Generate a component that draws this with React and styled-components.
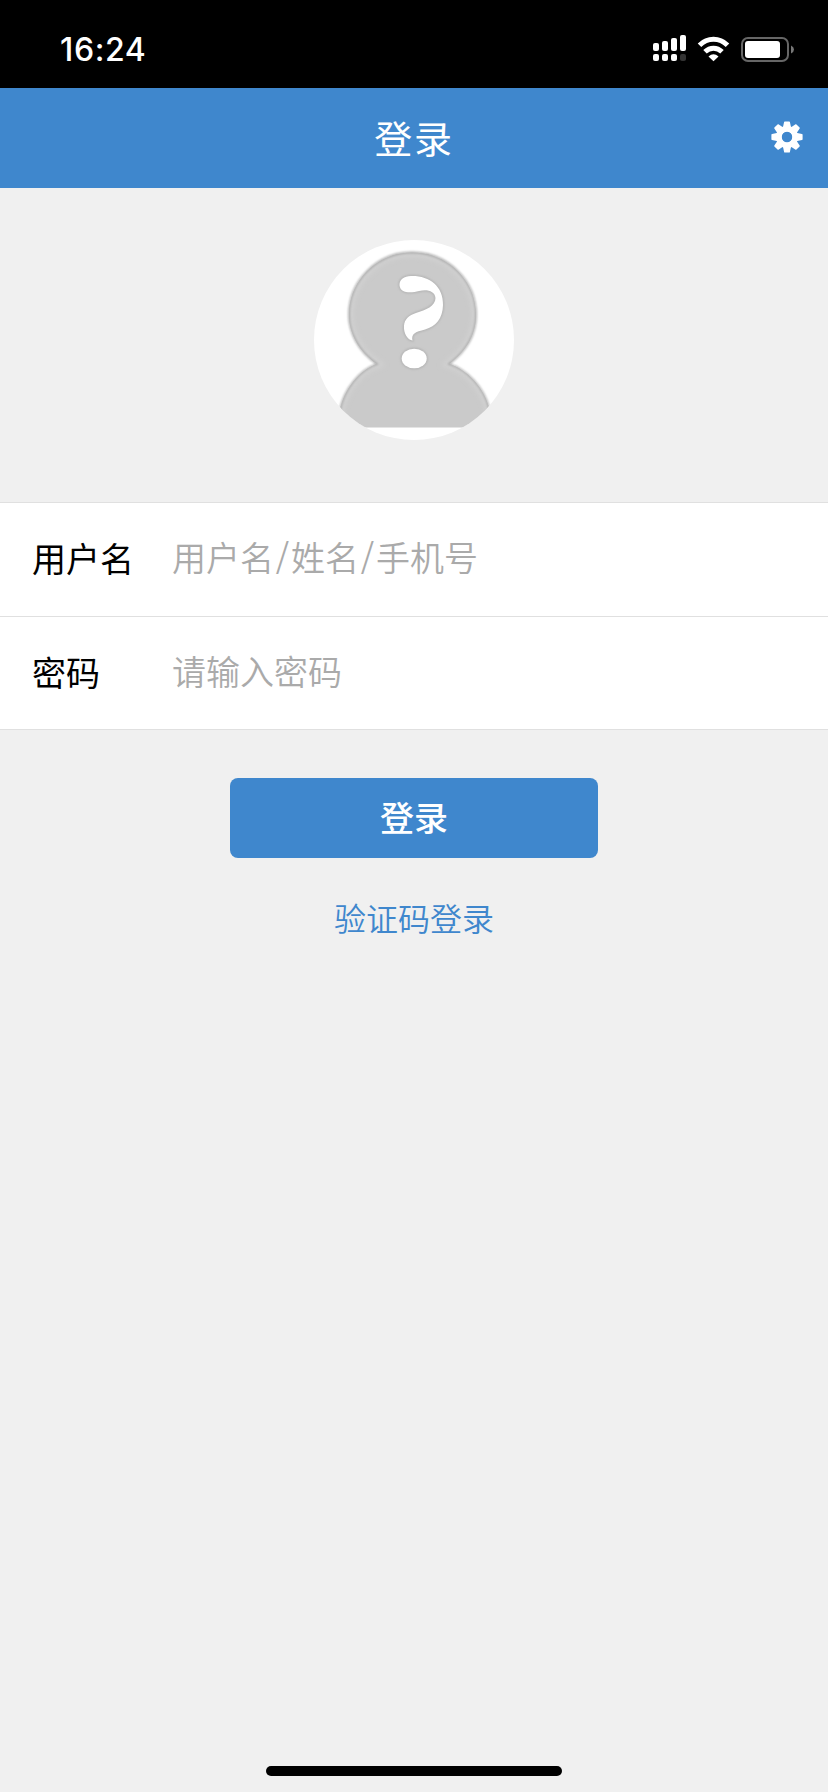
import React from "react";
import styled, { createGlobalStyle } from "styled-components";

const Global = createGlobalStyle`
  *, *::before, *::after { box-sizing: border-box; }
  body {
    margin: 0;
    background: #f0f0f0;
    font-family: "Noto Sans CJK SC", sans-serif;
  }
`;

const Screen = styled.div`
  display: flex;
  flex-direction: column;
  width: 828px;
  height: 1792px;
  overflow: hidden;
  background: #f0f0f0;
`;

const StatusBar = styled.div`
  display: flex;
  justify-content: space-between;
  align-items: flex-start;
  height: 88px;
  flex: none;
  padding: 0 34px 0 60px;
  background: #000;
`;

const Clock = styled.span`
  padding-top: 31px;
  color: #fff;
  font: 500 32px/38px Inter, sans-serif;
  letter-spacing: 0.6px;
`;

const StatusIcons = styled.svg`
  display: block;
  width: 144px;
  height: 32px;
  margin-top: 33px;
`;

const NavBar = styled.header`
  display: grid;
  grid-template-columns: 80px 1fr 80px;
  align-items: center;
  height: 100px;
  flex: none;
  background: #3f87cd;
`;

const Title = styled.h1`
  grid-column: 2;
  margin: 0 0 3px;
  text-align: center;
  color: #fff;
  font-size: 38px;
  font-weight: 400;
  line-height: 56px;
  letter-spacing: 1.8px;
`;

const SettingsButton = styled.button`
  display: block;
  width: 32px;
  height: 32px;
  margin: 0 0 2px 23px;
  padding: 0;
  border: 0;
  background: none;
  svg { display: block; }
`;

const AvatarArea = styled.div`
  display: flex;
  justify-content: center;
  height: 314px;
  flex: none;
  padding-top: 52px;
`;

const Avatar = styled.svg`
  display: block;
  width: 200px;
  height: 200px;
  border-radius: 50%;
  background: #fff;
`;

const Form = styled.div`
  flex: none;
  border-top: 1px solid #e0e0e0;
`;

const Row = styled.label`
  display: flex;
  height: ${(p) => p.$height}px;
  padding-left: 32px;
  border-bottom: 1px solid #e0e0e0;
  background: #fff;
  font-size: 34px;
  line-height: 50px;
`;

const Name = styled.span`
  width: 140px;
  padding-top: 30px;
  color: #000;
`;

const Placeholder = styled.span`
  padding-top: 29px;
  color: #aaa;
  font-weight: 350;
`;

const Slash = styled.span`
  display: inline-block;
  width: 17px;
  line-height: 30px;
  vertical-align: 3px;
  text-align: center;
`;

const Actions = styled.div`
  display: flex;
  flex-direction: column;
  align-items: center;
  padding-top: 48px;
`;

const LoginButton = styled.button`
  width: 368px;
  height: 80px;
  padding: 0 0 2px;
  border: 0;
  border-radius: 8px;
  background: #3f87cd;
  color: #fff;
  font: 500 34px/50px "Noto Sans CJK SC", sans-serif;
`;

const CodeLink = styled.a`
  margin-top: 35px;
  color: #3f87cd;
  font-size: 32px;
  font-weight: 350;
  line-height: 48px;
`;

const HomeIndicator = styled.div`
  width: 296px;
  height: 10px;
  margin: auto auto 16px;
  border-radius: 5px;
  background: #000;
`;

const signal = [
  [0, 12, 8],
  [9, 10, 10],
  [18, 7, 13],
  [27, 4, 16],
];

function StatusGlyphs() {
  return (
    <StatusIcons viewBox="650 33 144 32">
      {signal.map(([x, y, h], i) => (
        <g key={x} fill="#fff">
          <rect x={653 + x} y={31 + y} width="6" height={h} rx="2" />
          <rect x={653 + x} y="54" width="6" height="7" rx="2" fill={i === 3 ? "#333" : "#fff"} />
        </g>
      ))}
      <g fill="none" stroke="#fff" strokeWidth="5">
        <path d="M699.5 45.2C707.5 37.3 719.5 37.3 727.5 45.2" />
        <path d="M705 51.8C710 47 717 47 722 51.8" />
      </g>
      <path d="M708.5 56.4Q713.5 52.1 718.5 56.4L713.5 61.2Z" fill="#fff" />
      <rect x="742" y="38" width="46" height="23" rx="6" fill="none" stroke="#666" strokeWidth="2" />
      <rect x="745" y="41" width="35" height="17" rx="3" fill="#fff" />
      <path d="M791 45.5Q794 47 794 49.5T791 53.5Z" fill="#777" />
    </StatusIcons>
  );
}

function Gear() {
  return (
    <svg width="32" height="32" viewBox="-16 -16 32 32">
      <g fill="#fff">
        {[0, 45, 90, 135, 180, 225, 270, 315].map((a) => (
          <path key={a} transform={`rotate(${a})`} d="M-4.2-9L-2.900-15Q-2.8-15.6-2.2-15.6H2.2Q2.8-15.6 2.900-15L4.2-9Z" />
        ))}
      </g>
      <circle r="8" fill="none" stroke="#fff" strokeWidth="6" />
      <circle r="5.2" fill="#3f87cd" />
    </svg>
  );
}

const OUTLINE =
  "M26 187.5V170C30 150 45 130 63 124C44 111 35 92 35 75C35 40 64 12.5 98 12.5C133 12.5 162 40 162 75C162 96 151 112 135 124C152 129 170 147 175 168V187.5";

function UnknownPerson() {
  return (
    <Avatar viewBox="0 0 200 200">
      <defs>
        <filter id="soft" x="-10%" y="-10%" width="120%" height="120%">
          <feGaussianBlur stdDeviation="0.8" />
        </filter>
        <filter id="inner" x="-10%" y="-10%" width="120%" height="120%">
          <feGaussianBlur stdDeviation="2.5" />
        </filter>
        <clipPath id="person">
          <path d={`${OUTLINE}Z`} />
        </clipPath>
      </defs>
      <g clipPath="url(#person)">
        <path fill="#cacaca" d="M0 0H200V200H0Z" />
        <path filter="url(#inner)" fill="none" stroke="#d3d3d3" strokeWidth="7" d={OUTLINE} />
      </g>
      <path filter="url(#soft)" fill="none" stroke="#a8a8a8" strokeWidth="1.8" d={OUTLINE} />
      <g fill="none" stroke="#b0b0b0" strokeWidth="2" filter="url(#soft)">
        <QuestionMark />
      </g>
      <g fill="#fff">
        <QuestionMark />
      </g>
    </Avatar>
  );
}

function QuestionMark() {
  return (
    <>
      <path d="M97 36C115 35.500 129.500 46 129 65C128.500 79 122 86 111 89.500C101 92 97 94 98.500 100.500C94 100 89.500 94 90 86C90.500 79 95 75.500 102 73C112 70 121.500 66 121.500 58C121 51 113 49 105 51C96 53.500 86 53 85.500 45C85.500 39 90 36.500 97 36Z" />
      <ellipse cx="100.200" cy="118.500" rx="12.500" ry="9.800" />
    </>
  );
}

export default function App() {
  return (
    <Screen>
      <Global />
      <StatusBar>
        <Clock>16:24</Clock>
        <StatusGlyphs />
      </StatusBar>
      <NavBar>
        <Title>登录</Title>
        <SettingsButton aria-label="设置">
          <Gear />
        </SettingsButton>
      </NavBar>
      <AvatarArea>
        <UnknownPerson />
      </AvatarArea>
      <Form>
        <Row $height={114}>
          <Name>用户名</Name>
          <Placeholder>
            用户名<Slash>/</Slash>姓名<Slash>/</Slash>手机号
          </Placeholder>
        </Row>
        <Row $height={113}>
          <Name>密码</Name>
          <Placeholder>请输入密码</Placeholder>
        </Row>
      </Form>
      <Actions>
        <LoginButton>登录</LoginButton>
        <CodeLink>验证码登录</CodeLink>
      </Actions>
      <HomeIndicator />
    </Screen>
  );
}
